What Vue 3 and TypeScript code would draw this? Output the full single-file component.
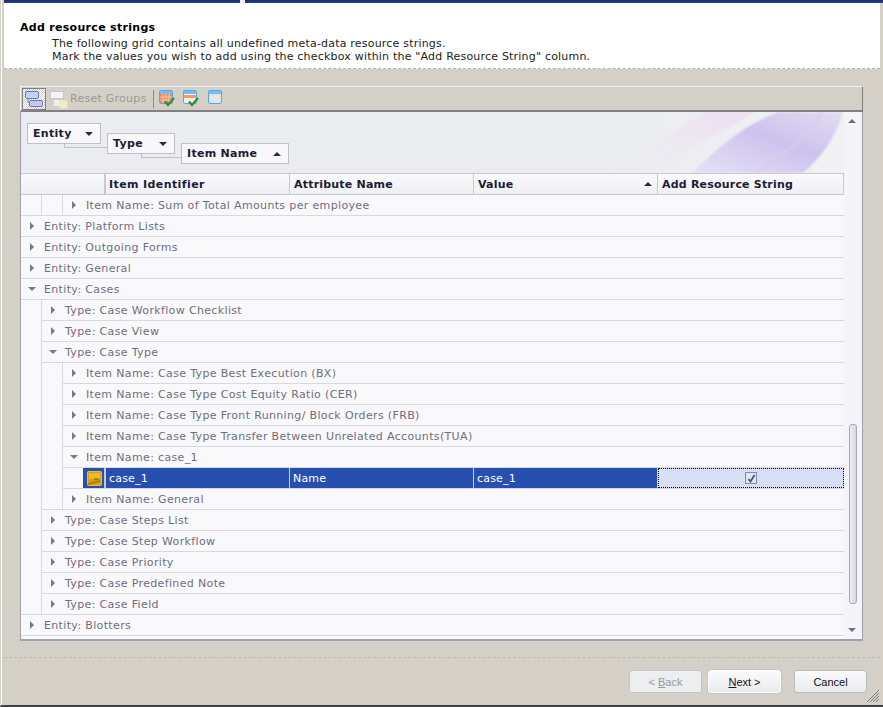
<script setup lang="ts">
interface Row {
  label: string
  level: number
  open?: boolean
  data?: boolean
}

const rows: Row[] = [
  { label: 'Item Name: Sum of Total Amounts per employee', level: 2 },
  { label: 'Entity: Platform Lists', level: 0 },
  { label: 'Entity: Outgoing Forms', level: 0 },
  { label: 'Entity: General', level: 0 },
  { label: 'Entity: Cases', level: 0, open: true },
  { label: 'Type: Case Workflow Checklist', level: 1 },
  { label: 'Type: Case View', level: 1 },
  { label: 'Type: Case Type', level: 1, open: true },
  { label: 'Item Name: Case Type Best Execution (BX)', level: 2 },
  { label: 'Item Name: Case Type Cost Equity Ratio (CER)', level: 2 },
  { label: 'Item Name: Case Type Front Running/ Block Orders (FRB)', level: 2 },
  { label: 'Item Name: Case Type Transfer Between Unrelated Accounts(TUA)', level: 2 },
  { label: 'Item Name: case_1', level: 2, open: true },
  { label: 'case_1', level: 3, data: true },
  { label: 'Item Name: General', level: 2 },
  { label: 'Type: Case Steps List', level: 1 },
  { label: 'Type: Case Step Workflow', level: 1 },
  { label: 'Type: Case Priority', level: 1 },
  { label: 'Type: Case Predefined Note', level: 1 },
  { label: 'Type: Case Field', level: 1 },
  { label: 'Entity: Blotters', level: 0 },
]

const groups = [
  { name: 'Entity', up: false },
  { name: 'Type', up: false },
  { name: 'Item Name', up: true },
]

// an indent gets the row line too when the next row sits further left
function closesIndent(i: number, n: number) {
  const next = rows[i + 1]?.level ?? 0
  return n - 1 >= next
}
</script>

<template>
  <div class="dialog">
    <div class="topbar"><span class="notch"></span></div>
    <header class="head">
      <h1>Add resource strings</h1>
      <p>The following grid contains all undefined meta-data resource strings.</p>
      <p>Mark the values you wish to add using the checkbox within the "Add Resource String" column.</p>
    </header>

    <main class="body">
      <div class="toolbar">
        <button class="tool active">
          <svg width="20" height="20" viewBox="0 0 20 20">
            <rect x="1.5" y="2.5" width="13" height="7" rx="1.5" fill="#c4d0f4" stroke="#6a78c8" />
            <rect x="5.5" y="11.5" width="13" height="6" rx="1.5" fill="#c4c8f0" stroke="#6a78c8" />
            <path d="M4 9.5v4h1.5" fill="none" stroke="#6a78c8" />
          </svg>
        </button>
        <span class="tool plain">
          <svg width="20" height="20" viewBox="0 0 20 20">
            <rect x="2.5" y="2.5" width="13" height="7" fill="#f4f4f6" stroke="#c8c8cc" />
            <rect x="5.5" y="10.5" width="10" height="7" fill="#f0f0f2" stroke="#d0d0d4" />
            <rect x="12" y="12" width="7" height="7" fill="#f4eccc" stroke="#ece4c4" />
          </svg>
        </span>
        <span class="reset">Reset Groups</span>
        <span class="sep"></span>
        <svg class="ico" width="20" height="20" viewBox="0 0 20 20">
          <rect x="0.5" y="1.5" width="13" height="13" rx="1.5" fill="#f08a5c" stroke="#5aa8ec" />
          <path d="M1 2h12v3H1z" fill="#78bcf4" />
          <path d="M1 8h12M1 11h12M4 5v9M7 5v9M10 5v9" stroke="#f8c8a8" />
          <path d="M6 12.5l3 3.5 6-7" fill="none" stroke="#3c8c34" stroke-width="2.4" />
        </svg>
        <svg class="ico" width="20" height="20" viewBox="0 0 20 20">
          <rect x="0.5" y="1.5" width="13" height="13" rx="1.5" fill="#f4f0ec" stroke="#5aa8ec" />
          <path d="M1 2h12v3H1z" fill="#78bcf4" />
          <path d="M1 6h12v3H1z" fill="#f09a70" />
          <path d="M6 12.5l3 3.5 6-7" fill="none" stroke="#3c8c34" stroke-width="2.4" />
        </svg>
        <svg class="ico" width="16" height="20" viewBox="0 0 16 20">
          <rect x="1.5" y="1.5" width="13" height="13" rx="1.5" fill="#dcdcdc" stroke="#5aa8ec" />
          <path d="M2 2h12v3H2z" fill="#78bcf4" />
          <path d="M2 8h12M2 11h12M5 5v9M8 5v9M11 5v9" stroke="#eeeeee" />
        </svg>
      </div>

      <div class="grid">
        <div class="table">
          <div class="group-panel">
            <svg class="swoosh" width="230" height="61" viewBox="0 0 230 61">
              <defs>
                <linearGradient id="sw1" x1="0" y1="1" x2="1" y2="0">
                  <stop offset="0" stop-color="#e6e2f6" />
                  <stop offset="0.55" stop-color="#cec2ee" />
                  <stop offset="1" stop-color="#e4dcf2" />
                </linearGradient>
                <linearGradient id="sw2" x1="0" y1="1" x2="1" y2="0">
                  <stop offset="0" stop-color="#eceaf0" stop-opacity="0" />
                  <stop offset="1" stop-color="#eedcf2" />
                </linearGradient>
                <filter id="soft"><feGaussianBlur stdDeviation="0.8" /></filter>
              </defs>
              <path d="M36 61C70 40 110 20 141 0H90C60 20 30 42 0 61Z" fill="url(#sw2)" filter="url(#soft)" />
              <path d="M78 61C105 35 130 12 165 0H229C222 26 206 46 189 61Z" fill="url(#sw1)" filter="url(#soft)" />
              <path d="M143 61C165 45 190 30 208 0" fill="none" stroke="#dccaf0" stroke-width="2" filter="url(#soft)" />
            </svg>
            <div
              v-for="(g, i) in groups"
              :key="g.name"
              class="chip"
              :class="`chip-${i}`"
            >
              <span>{{ g.name }}</span>
              <i :class="g.up ? 'tri up' : 'tri down'"></i>
            </div>
          </div>

          <div class="cols">
            <div class="col-gap"></div>
            <div class="col c1">Item Identifier</div>
            <div class="col c2">Attribute Name</div>
            <div class="col c3">Value<i class="tri up"></i></div>
            <div class="col c4">Add Resource String</div>
          </div>

          <div class="rows">
            <div v-for="(r, i) in rows" :key="r.label + i" class="row">
              <span
                v-for="n in r.level"
                :key="n"
                class="indent"
                :class="{ closing: closesIndent(i, n), bare: r.data && n === 3 }"
              ></span>
              <div v-if="r.data" class="data">
                <div class="rowicon">
                  <svg width="15" height="15" viewBox="0 0 15 15">
                    <rect x="0.5" y="0.5" width="14" height="14" rx="1" fill="#d8a010" stroke="#eac030" />
                    <path d="M2 2h11v6H2z" fill="#ecbc28" />
                    <path d="M1 12l12-3v2l-12 3z" fill="#b07c08" />
                    <path d="M7 8h5" stroke="#7c5808" />
                  </svg>
                </div>
                <div class="val v1">{{ r.label }}</div>
                <div class="val v2">Name</div>
                <div class="val v3">{{ r.label }}</div>
                <div class="val v4">
                  <span class="check">
                    <svg width="9" height="9" viewBox="0 0 9 9">
                      <path d="M1.5 5l2 2.5L7.5 1" fill="none" stroke="#3c50a8" stroke-width="1.8" />
                    </svg>
                  </span>
                </div>
              </div>
              <div v-else class="cell">
                <i :class="r.open ? 'tri open' : 'tri closed'"></i>
                <span>{{ r.label }}</span>
              </div>
            </div>
          </div>
        </div>

        <div class="scroll">
          <i class="tri up small"></i>
          <div class="thumb"></div>
          <i class="tri down small"></i>
        </div>
      </div>
    </main>

    <footer class="foot">
      <button class="btn off">&lt; <u>B</u>ack</button>
      <button class="btn next"><u>N</u>ext &gt;</button>
      <button class="btn cancel">Cancel</button>
      <svg class="grip" width="14" height="14" viewBox="0 0 14 14">
        <path d="M13 1L1 13M13 4L4 13M13 7L7 13M13 10L10 13" stroke="#808080" stroke-width="1" />
      </svg>
    </footer>
  </div>
</template>

<style>
html,
body {
  margin: 0;
  background: #d4d0c8;
}
</style>

<style scoped>
.dialog {
  width: 883px;
  height: 707px;
  box-sizing: border-box;
  position: relative;
  display: flex;
  flex-direction: column;
  background: #d4d0c8;
  border-bottom: 2px solid #404040;
  border-left: 1px solid #d4d0c8;
  font-family: "DejaVu Sans", Verdana, sans-serif;
  font-size: 11px;
  overflow: hidden;
}

.dialog::before {
  content: "";
  position: absolute;
  left: 0;
  top: 0;
  bottom: 0;
  width: 1px;
  background: #fff;
}

.topbar {
  height: 3px;
  margin-left: 3px;
  background: linear-gradient(#1a2c6c, #2c4484);
  position: relative;
}

.notch {
  position: absolute;
  left: 236px;
  top: 0;
  width: 5px;
  height: 3px;
  background: #f0f0f0;
}

.head {
  height: 66px;
  box-sizing: border-box;
  margin-left: 3px;
  margin-right: 3px;
  padding: 17px 0 0 16px;
  background: #fff;
  border-bottom: 1px dashed #b4b2ac;
  color: #1c1c1c;
}

.head h1 {
  margin: 0 0 2px;
  font-size: 11px;
  line-height: 15px;
  font-weight: bold;
  color: #000;
  letter-spacing: 0.3px;
}

.head p {
  margin: 0 0 0 32px;
  line-height: 13px;
  letter-spacing: 0.2px;
}

.body {
  height: 589px;
  box-sizing: border-box;
  padding: 17px 17px 0 16px;
  border-bottom: 1px dashed #bcbab2;
  margin-right: 3px;
  margin-left: 3px;
}

.toolbar {
  height: 26px;
  box-sizing: border-box;
  display: flex;
  align-items: center;
  padding-left: 1px;
  border-top: 1px solid #f4f2ee;
  border-left: 1px solid #f4f2ee;
  border-right: 1px solid #808080;
  border-bottom: 2px solid #808086;
  background: #d4d0c8;
}

.tool {
  width: 24px;
  height: 22px;
  padding: 0;
  box-sizing: border-box;
  display: flex;
  align-items: center;
  justify-content: center;
  background: transparent;
  border: 0;
}

.tool.active {
  border: 1px solid #808080;
  background: conic-gradient(#fff 25%, #d4d0c8 0 50%, #fff 0 75%, #d4d0c8 0) 0 0 / 2px 2px;
}

.reset {
  color: #9c9a94;
  letter-spacing: 0.25px;
}

.sep {
  width: 1px;
  height: 18px;
  margin: 0 5px 0 7px;
  background: #8c8a84;
}

.ico {
  margin-right: 4px;
}

.grid {
  display: flex;
  height: 529px;
  box-sizing: border-box;
  border-left: 1px solid #a0a0b0;
  border-right: 1px solid #a0a0b0;
  border-bottom: 2px solid #a0a0b0;
  background: #f9f9fb;
}

.table {
  width: 823px;
  flex: none;
  display: flex;
  flex-direction: column;
  overflow: hidden;
}

.group-panel {
  position: relative;
  height: 61px;
  flex: none;
  background: linear-gradient(90deg, #ebecf0 70%, #f0f1f3);
}

.swoosh {
  position: absolute;
  right: 0;
  top: 0;
}

.chip {
  position: absolute;
  height: 21px;
  box-sizing: border-box;
  display: flex;
  align-items: center;
  justify-content: space-between;
  padding: 0 7px 0 5px;
  background: #f8f8fa;
  border: 1px solid #c0c0cc;
  color: #1c1c34;
  font-weight: bold;
  letter-spacing: 0.3px;
}

.chip-0 {
  left: 6px;
  top: 11px;
  width: 74px;
}

.chip-1 {
  left: 86px;
  top: 21px;
  width: 68px;
}

.chip-2 {
  left: 160px;
  top: 31px;
  width: 108px;
}

.chip-0::after,
.chip-1::after {
  content: "";
  position: absolute;
  top: 19px;
  height: 4px;
  border-left: 1px solid #c0c0cc;
  border-bottom: 1px solid #c0c0cc;
}

.chip-0::after {
  left: 36px;
  width: 42px;
}

.chip-1::after {
  left: 33px;
  width: 40px;
}

.tri {
  display: inline-block;
  width: 0;
  height: 0;
  flex: none;
}

.tri.down {
  border-left: 4px solid transparent;
  border-right: 4px solid transparent;
  border-top: 4px solid #2a2a40;
}

.tri.up {
  border-left: 4px solid transparent;
  border-right: 4px solid transparent;
  border-bottom: 4px solid #2a2a40;
}

.tri.closed {
  border-top: 4px solid transparent;
  border-bottom: 4px solid transparent;
  border-left: 4px solid #787888;
  margin: 0 10px 0 9px;
}

.tri.open {
  border-left: 4px solid transparent;
  border-right: 4px solid transparent;
  border-top: 4px solid #787888;
  margin: 0 8px 0 7px;
}

.cols {
  height: 22px;
  flex: none;
  box-sizing: border-box;
  display: flex;
  background: linear-gradient(#fafafc, #eff0f4);
  border-top: 1px solid #c8c8d2;
  border-bottom: 1px solid #c8c8d2;
  color: #1c1c34;
  font-weight: bold;
  letter-spacing: 0.2px;
}

.col-gap {
  width: 83px;
  flex: none;
  border-right: 2px solid #c8c8d2;
}

.col {
  display: flex;
  align-items: center;
  justify-content: space-between;
  box-sizing: border-box;
  padding: 0 5px 0 4px;
  border-right: 1px solid #c8c8d2;
}

.c1 {
  padding-left: 3px;
  letter-spacing: 0.4px;
}

.c1,
.c2,
.c3,
.v1,
.v2,
.v3 {
  width: 184px;
  flex: none;
}

.c4 {
  flex: 1;
}

.rows {
  flex: 1;
  display: flex;
  flex-direction: column;
  color: #6e6e7e;
  letter-spacing: 0.35px;
}

.row {
  height: 21px;
  flex: none;
  display: flex;
}

.indent {
  width: 20px;
  flex: none;
  border-right: 1px solid #d8d8e0;
}

.indent.closing {
  border-bottom: 1px solid #d8d8e0;
}

.indent.bare {
  border-right: 0;
}

.cell {
  flex: 1;
  display: flex;
  align-items: center;
  box-sizing: border-box;
  border-bottom: 1px solid #d8d8e0;
}

.data {
  flex: 1;
  display: flex;
  box-sizing: border-box;
  border-bottom: 1px solid #d8d8e0;
  color: #fff;
  background: #274fb0;
  padding-left: 23px;
  position: relative;
  letter-spacing: 0.2px;
}

.rowicon {
  position: absolute;
  left: 0;
  top: 0;
  width: 23px;
  height: 20px;
  box-sizing: border-box;
  padding-left: 1px;
  display: flex;
  align-items: center;
  justify-content: center;
  border-right: 2px solid #c8c8d2;
}

.val {
  box-sizing: border-box;
  display: flex;
  align-items: center;
  padding-left: 3px;
  border-right: 1px solid #c8d0e4;
}

.v4 {
  flex: 1;
  justify-content: center;
  padding: 0;
  border-right: 0;
  background: #d8def4;
  outline: 1px dotted #000;
  outline-offset: -1px;
}

.check {
  width: 12px;
  height: 12px;
  box-sizing: border-box;
  display: flex;
  align-items: center;
  justify-content: center;
  border: 1px solid #8c8c8c;
  background: #e4e4ec;
}

.scroll {
  flex: 1;
  background: #f4f4f9;
  position: relative;
}

.tri.small {
  position: absolute;
  left: 4px;
  border-bottom-color: #70707e;
  border-top-color: #70707e;
}

.tri.small.up {
  top: 7px;
}

.tri.small.down {
  bottom: 7px;
}

.thumb {
  position: absolute;
  top: 312px;
  left: 5px;
  width: 8px;
  height: 180px;
  box-sizing: border-box;
  border: 1px solid #a8a8b8;
  border-radius: 3px;
  background: linear-gradient(90deg, #f0f0f4, #d4d4de);
}

.foot {
  flex: 1;
  display: flex;
  align-items: flex-start;
  margin-left: 3px;
  padding: 12px 0 0 625px;
  position: relative;
}

.btn {
  width: 73px;
  height: 23px;
  padding: 0;
  box-sizing: border-box;
  font-family: "Liberation Sans", Tahoma, sans-serif;
  font-size: 11px;
  color: #111;
  border: 1px solid #b8bcc0;
  border-radius: 3px;
  background: linear-gradient(#fbfbfc, #e8eaee);
}

.btn.off {
  color: #9a9a9a;
  background: #eceef0;
  border-color: #c4c8cc;
}

.btn.next {
  margin-left: 6px;
  border-color: #fff;
  box-shadow: 0 0 0 1px #c4c4c4;
}

.btn.cancel {
  margin-left: 13px;
}

.grip {
  position: absolute;
  right: 3px;
  bottom: 2px;
}
</style>
